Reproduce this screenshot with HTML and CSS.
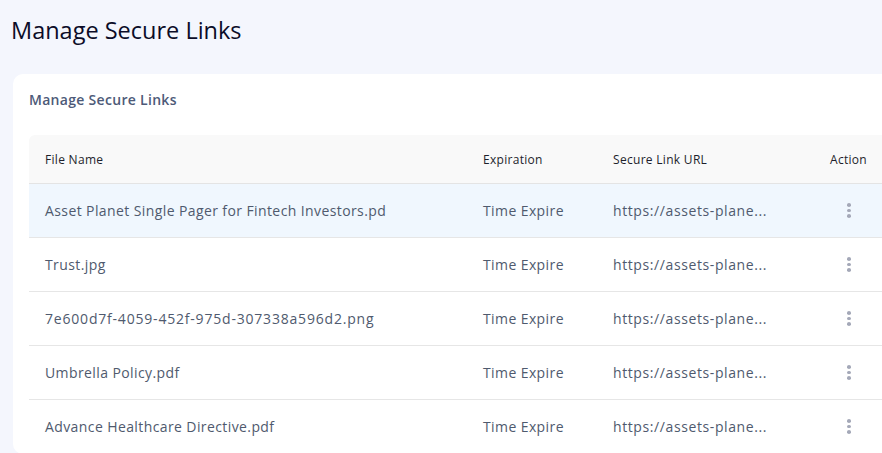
FILE: index.html
```html
<!DOCTYPE html>
<html>
<head>
<meta charset="utf-8">
<link rel="stylesheet" href="styles.css">
</head>
<body>
<div class="page">
  <h1 class="page-title">Manage Secure Links</h1>
  <section class="card">
    <h2 class="card-title">Manage Secure Links</h2>
    <table class="links">
      <colgroup>
        <col class="c-name"><col class="c-exp"><col class="c-url"><col class="c-act">
      </colgroup>
      <thead>
        <tr><th>File Name</th><th>Expiration</th><th>Secure Link URL</th><th>Action</th></tr>
      </thead>
      <tbody>
        <tr class="active"><td>Asset Planet Single Pager for Fintech Investors.pd</td><td>Time Expire</td><td class="url">https://assets-plane...</td><td><span class="dots"><i></i><i></i><i></i></span></td></tr>
        <tr><td>Trust.jpg</td><td>Time Expire</td><td class="url">https://assets-plane...</td><td><span class="dots"><i></i><i></i><i></i></span></td></tr>
        <tr><td class="num">7e600d7f-4059-452f-975d-307338a596d2.png</td><td>Time Expire</td><td class="url">https://assets-plane...</td><td><span class="dots"><i></i><i></i><i></i></span></td></tr>
        <tr><td>Umbrella Policy.pdf</td><td>Time Expire</td><td class="url">https://assets-plane...</td><td><span class="dots"><i></i><i></i><i></i></span></td></tr>
        <tr><td>Advance Healthcare Directive.pdf</td><td>Time Expire</td><td class="url">https://assets-plane...</td><td><span class="dots"><i></i><i></i><i></i></span></td></tr>
      </tbody>
    </table>
  </section>
</div>
</body>
</html>
```

FILE: styles.css
```css
html, body {
  margin: 0;
  padding: 0;
  background: #f4f6fd;
  overflow: hidden;
  font-family: "Open Sans", "Liberation Sans", sans-serif;
}
.page {
  width: 940px;
  padding: 14px 0 0 11px;
}
.page-title {
  margin: 0;
  font-size: 23.5px;
  font-weight: 400;
  color: #0b0c28;
  line-height: 32px;
}
.card {
  margin: 28px 0 0 2px;
  background: #ffffff;
  border-radius: 10px;
  padding: 16px 0 0 16px;
}
.card-title {
  margin: 0;
  font-size: 14px;
  font-weight: 600;
  letter-spacing: 0.3px;
  color: #4d5a78;
  line-height: 20px;
}
.links {
  margin-top: 25px;
  border-collapse: collapse;
  table-layout: fixed;
  width: 885px;
}
.c-name { width: 438px; }
.c-exp { width: 130px; }
.c-url { width: 217px; }
.c-act { width: 100px; }
.links th {
  background: #f9f9f9;
  text-align: left;
  font-weight: 400;
  font-size: 12px;
  letter-spacing: 0.3px;
  color: #1d1f2c;
  height: 48px;
  padding: 0 16px;
  border-bottom: 1px solid #e4e4e4;
}
.links th:first-child { border-top-left-radius: 6px; }
.links td {
  height: 53px;
  padding: 0 16px;
  font-size: 14px;
  letter-spacing: 0.4px;
  color: #4f5a6e;
  border-bottom: 1px solid #e6e6e6;
  white-space: nowrap;
  overflow: hidden;
}
.links td.url { letter-spacing: 0.6px; }
.links td.num { letter-spacing: 0.8px; }
.links tr.active td { background: #f0f7fe; }
.dots {
  display: flex;
  flex-direction: column;
  gap: 2px;
  margin-left: 17px;
  width: 4px;
}
.dots i {
  display: block;
  width: 4px;
  height: 3.5px;
  border-radius: 50%;
  background: #a4a8b8;
}
```
